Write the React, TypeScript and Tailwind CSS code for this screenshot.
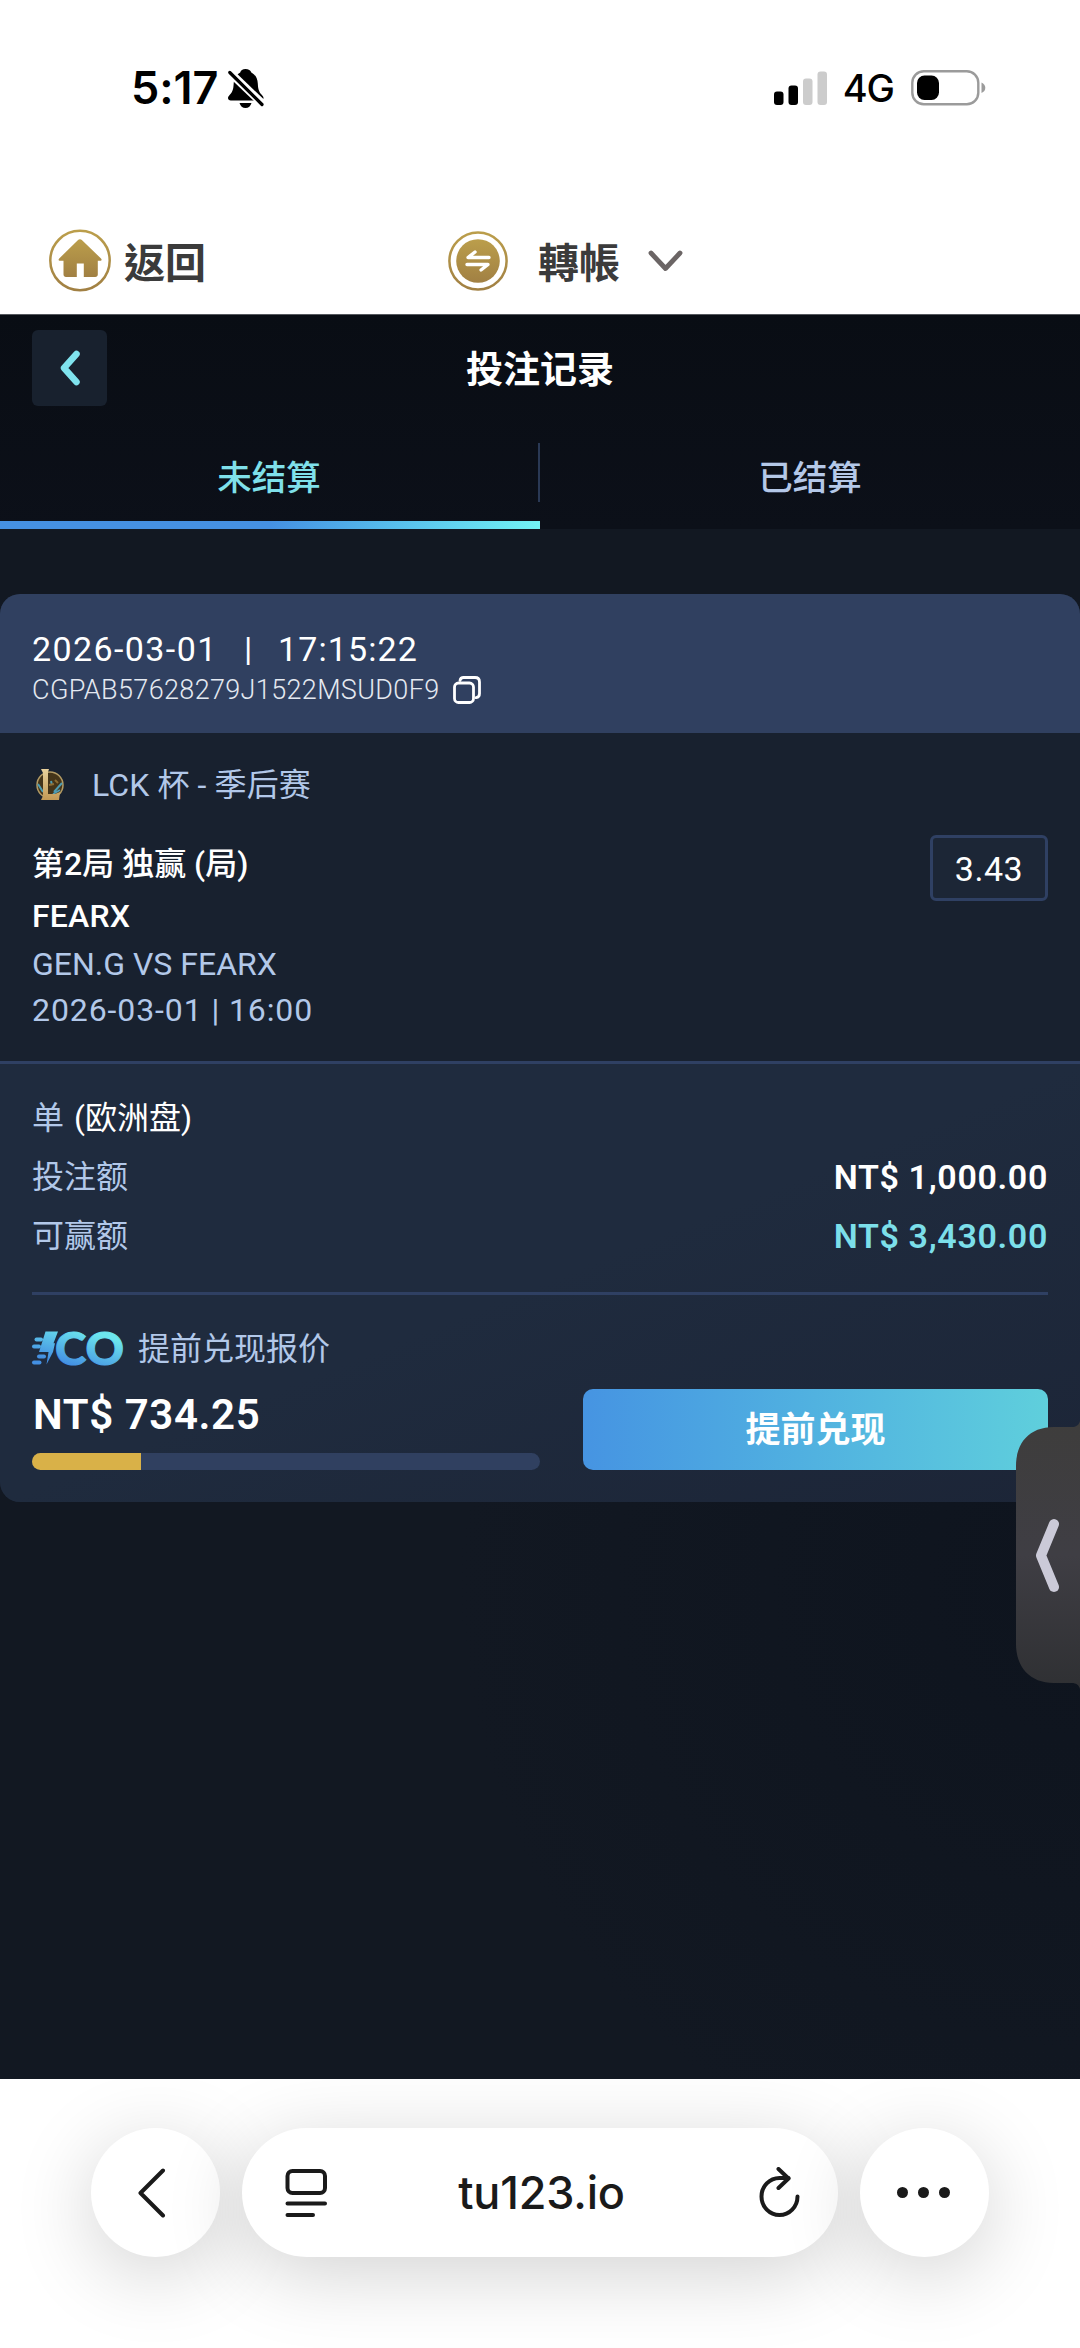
import type { ReactNode } from "react";

const tabs = [
  { label: "未结算", active: true },
  { label: "已结算", active: false },
];

const amounts = [
  { label: "投注额", value: "NT$ 1,000.00", color: "text-white" },
  { label: "可赢额", value: "NT$ 3,430.00", color: "text-[#7cdfea]" },
];

const cashOutProgress = 21.4;

function BellOffIcon() {
  return (
    <svg width="36" height="39" viewBox="0 0 36 39">
      <path
        d="M17.500 0c3 0 5.200 1.400 5.800 3.400C27.500 5.600 29.500 9.500 29.800 14.500c.3 6 1.200 8.500 3.900 11.200 1.200 1.300 1.800 2.100 1.800 3.300 0 1.600-1.100 2.500-2.800 2.500H2.800C1.100 31.500 0 30.600 0 29c0-1.200.6-2 1.800-3.300 2.700-2.700 3.600-5.200 3.900-11.200.3-5 2.300-8.900 6.500-11.100C12.800 1.400 14.500 0 17.500 0Z"
        fill="#000"
      />
      <path d="M11.500 34h12c-.8 3-3 5-6 5s-5.200-2-6-5Z" fill="#000" />
      <path d="M-2 -0.300 38 38" stroke="#fff" strokeWidth="8" />
      <path
        d="M1.800 3.500 34 35.500"
        stroke="#000"
        strokeWidth="3.200"
        strokeLinecap="round"
      />
    </svg>
  );
}

function SignalIcon() {
  return (
    <svg width="53" height="34" viewBox="0 0 53 34">
      <rect x="0" y="20.500" width="9.500" height="13.500" rx="3" fill="#000" />
      <rect x="14.500" y="14.500" width="9.500" height="19.500" rx="3" fill="#000" />
      <rect x="29" y="7.500" width="9.500" height="26.500" rx="3" fill="#ccc" />
      <rect x="43.500" y="0.500" width="9.500" height="33.500" rx="3" fill="#ccc" />
    </svg>
  );
}

function BatteryIcon() {
  return (
    <svg width="75" height="36" viewBox="0 0 75 36">
      <rect
        x="1.300"
        y="1.300"
        width="66"
        height="33"
        rx="11.500"
        fill="none"
        stroke="#9b9b9b"
        strokeWidth="2.400"
      />
      <rect x="6" y="5.500" width="22" height="24.500" rx="7.500" fill="#000" />
      <path d="M70.500 12.500c2.400 1 3.800 3 3.800 5.300s-1.400 4.300-3.800 5.300Z" fill="#9b9b9b" />
    </svg>
  );
}

function Gold({ id }: { id: string }) {
  return (
    <defs>
      <linearGradient id={id} x1="0" y1="0" x2="0" y2="1">
        <stop offset="0" stopColor="#bb9e4b" />
        <stop offset="1" stopColor="#a18043" />
      </linearGradient>
    </defs>
  );
}

function HomeIcon() {
  return (
    <svg width="62" height="63" viewBox="0 0 62 63">
      <Gold id="gold-home" />
      <circle
        cx="31"
        cy="31.500"
        r="29.700"
        fill="none"
        stroke="url(#gold-home)"
        strokeWidth="2.500"
      />
      <path
        d="M28.800 11.200c1.300-1.300 3-1.300 4.300 0L52 29.500c1.200 1.200.6 2.300-1 2.300h-2.200v13.700c0 1.600-1 2.500-2.500 2.500H34.800V34.500h-7V48H17c-1.500 0-2.500-.9-2.500-2.500V31.800h-3.300c-1.600 0-2.200-1.100-1-2.300Z"
        fill="url(#gold-home)"
      />
    </svg>
  );
}

function TransferIcon() {
  return (
    <svg width="60" height="60" viewBox="0 0 60 60">
      <Gold id="gold-transfer" />
      <circle
        cx="30"
        cy="30"
        r="28.600"
        fill="none"
        stroke="url(#gold-transfer)"
        strokeWidth="2.500"
      />
      <circle cx="30" cy="30" r="21.800" fill="url(#gold-transfer)" />
      <g
        fill="none"
        stroke="#fff"
        strokeWidth="3.400"
        strokeLinecap="round"
        strokeLinejoin="round"
      >
        <path d="M41 26.500H20l7-5.500" />
        <path d="M19 33.500h21l-7 5.500" />
      </g>
    </svg>
  );
}

function CopyIcon() {
  return (
    <svg
      width="28"
      height="28"
      viewBox="0 0 28 28"
      fill="none"
      stroke="#fff"
      strokeWidth="2.800"
      strokeLinecap="round"
    >
      <rect x="1.500" y="7" width="19" height="19.500" rx="4" />
      <path d="M7 4.500c.4-2 1.600-3 3.500-3H22c3 0 4.500 1.500 4.500 4.500v11.500c0 2.500-1 3.800-3.300 4.200" />
    </svg>
  );
}

function LeagueIcon() {
  return (
    <svg width="30" height="34" viewBox="0 0 30 34">
      <defs>
        <linearGradient id="league-gold" x1="0" y1="0" x2="0" y2="1">
          <stop offset="0" stopColor="#e9d29c" />
          <stop offset="1" stopColor="#c39a55" />
        </linearGradient>
      </defs>
      <circle cx="15" cy="17" r="13" fill="#453519" stroke="#b39b64" strokeWidth="1.500" />
      <path d="m3 16 5 8M27 15l-8 9M25 22l-7 4M16 13l1 4" stroke="#4e9cb2" strokeWidth="2" />
      <path d="m14 17 5-1M20 12l3 3" stroke="#8b6c33" strokeWidth="2" />
      <path
        d="M6 1h8l-1 3v22h7l5-2-1 8H6l2-4V5Z"
        fill="url(#league-gold)"
      />
    </svg>
  );
}

// lightning bolt with speed lines, followed by the CO wordmark
function CashOutLogo() {
  return (
    <svg
      className="overflow-visible"
      width="92"
      height="36"
      viewBox="0 0 92 36"
    >
      <defs>
        <linearGradient
          id="cash-out"
          x1="50"
          y1="0"
          x2="40"
          y2="36"
          gradientUnits="userSpaceOnUse"
        >
          <stop offset="0" stopColor="#6ce6ee" />
          <stop offset="1" stopColor="#438fe2" />
        </linearGradient>
      </defs>
      <g fill="url(#cash-out)">
        <path d="M13.500 1.500H26l-4.500 11.800h1.500L21 22l-6.500 12.500L16.500 22H7Z" />
        <rect x="2.500" y="7.500" width="8.500" height="4" rx="2" />
        <rect x="0" y="14.500" width="9" height="4" rx="2" />
        <rect x="5" y="24.500" width="9" height="4" rx="2" />
        <rect x="0" y="30.500" width="9.500" height="4" rx="2" />
        <text
          x="23"
          y="34.500"
          fontFamily="Lato, sans-serif"
          fontWeight="900"
          fontSize="46"
          stroke="url(#cash-out)"
          strokeWidth="1"
          textLength="69"
          lengthAdjust="spacingAndGlyphs"
        >
          CO
        </text>
      </g>
    </svg>
  );
}

function StatusBar() {
  return (
    <div className="flex h-[176px] items-start justify-between pt-[68px] pr-[94px] pl-[131px]">
      <div className="flex h-10 items-center gap-2.5">
        <span className="font-[Inter,sans-serif] text-[45px] leading-10 font-semibold tracking-[-0.1px] text-black">
          5:17
        </span>
        <BellOffIcon />
      </div>
      <div className="flex h-10 items-center">
        <SignalIcon />
        <span className="ml-4 font-[Inter,sans-serif] text-[38px] leading-[42px] font-medium tracking-[-1px] text-black">
          4G
        </span>
        <span className="ml-[17px]">
          <BatteryIcon />
        </span>
      </div>
    </div>
  );
}

function SiteHeader() {
  return (
    <div className="flex h-[139px] items-start border-b border-[#55585e] pl-[49px] font-['Noto_Sans_CJK_TC',sans-serif] text-[41px] leading-[60px] font-bold text-[#3b3b3b]">
      <div className="mt-[53px] flex w-[399px] items-center gap-[13px]">
        <HomeIcon />
        <span className="-mt-0.5">返回</span>
      </div>
      <div className="mt-[55px] flex items-center">
        <TransferIcon />
        <span className="-mt-0.5 ml-[30px]">轉帳</span>
        <svg className="ml-[28px]" width="35" height="22" viewBox="0 0 35 22" fill="none">
          <path
            d="m3 3 14.500 15.500L32 3"
            stroke="#6b6565"
            strokeWidth="4.800"
            strokeLinecap="round"
            strokeLinejoin="round"
          />
        </svg>
      </div>
    </div>
  );
}

function TitleBar() {
  return (
    <div className="grid h-[108px] grid-cols-[75px_1fr_75px] items-start px-8 pt-[15px]">
      <button className="flex h-[76px] items-center justify-center rounded-md bg-[#18212e]">
        <svg width="24" height="38" viewBox="0 0 24 38" fill="none">
          <path
            d="M18.500 5 6 19l12.500 14"
            stroke="#7fe3ee"
            strokeWidth="6.500"
            strokeLinecap="round"
            strokeLinejoin="round"
          />
        </svg>
      </button>
      <h1 className="text-center text-[37px] leading-[82px] font-bold text-white">
        投注记录
      </h1>
    </div>
  );
}

function Tabs() {
  return (
    <div className="grid h-[106px] grid-cols-2">
      {tabs.map((tab) => (
        <div key={tab.label} className="flex flex-col justify-between">
          <div
            className={
              tab.active
                ? "mt-5 h-[59px] border-r-2 border-[#2a3955] text-center text-[34.5px] leading-[70px] font-medium text-[#7fe0ea]"
                : "mt-5 h-[59px] text-center text-[34.5px] leading-[70px] font-medium text-[#b4c8e8]"
            }
          >
            {tab.label}
          </div>
          {tab.active && (
            <div className="h-2 bg-linear-to-r from-[#4590e2] from-50% to-[#72f3f4]" />
          )}
        </div>
      ))}
    </div>
  );
}

function BetCard() {
  return (
    <div className="mt-[65px] overflow-hidden rounded-[20px] bg-[#18212f] text-[#b2c8e9]">
      <div className="h-[139px] bg-[#304060] pt-[35px] pl-8 text-white">
        <div className="flex h-10 items-center text-[34px] leading-10">
          <span className="w-[212px] tracking-[1.4px]">2026-03-01</span>
          <span className="w-[34px]">|</span>
          <span className="tracking-[1.1px]">17:15:22</span>
        </div>
        <div className="mt-px flex h-10 items-center">
          <span className="w-[421px] text-[27px] leading-10 font-light tracking-[0.35px] whitespace-nowrap text-[#e4e9f1]">
            CGPAB57628279J1522MSUD0F9
          </span>
          <CopyIcon />
        </div>
      </div>

      <div className="h-[328px] px-8 pt-8">
        <div className="flex h-10 items-center gap-[27px] pl-[3px]">
          <LeagueIcon />
          <span className="text-[32px] leading-10 tracking-[0.1px] whitespace-nowrap">
            LCK 杯 - 季后赛
          </span>
        </div>
        <div className="mt-[30px] flex items-start justify-between">
          <div className="pt-1.5 text-[32px] leading-[46px]">
            <p className="font-medium text-white">第2局 独赢 (局)</p>
            <p className="mt-1.5 font-medium tracking-[0.2px] text-white">FEARX</p>
            <p className="mt-0.5">GEN.G VS FEARX</p>
            <p className="tracking-[0.9px]">2026-03-01 | 16:00</p>
          </div>
          <div className="flex h-[66px] w-[118px] items-center justify-center rounded-md border-3 border-[#2f4063] bg-[#1c2636] pt-0.5 text-[34px] tracking-[0.5px] text-white">
            3.43
          </div>
        </div>
      </div>

      <div className="border-t-3 border-[#2f4063] bg-linear-to-br from-[#1f2b3e] from-50% to-[#1c2537] px-8 pt-6 pb-8">
        <Row>
          <span>
            单 <span className="ml-0.5 text-white">(欧洲盘)</span>
          </span>
        </Row>
        {amounts.map((row) => (
          <Row key={row.label}>
            <span>{row.label}</span>
            <span
              className={`pt-0.5 text-[34px] font-semibold tracking-[0.65px] ${row.color}`}
            >
              {row.value}
            </span>
          </Row>
        ))}
        <div className="mt-[27px] h-[3px] bg-[#2f4063]" />
        <div className="mt-[33px] flex items-end justify-between">
          <div className="w-[508px]">
            <div className="flex h-10 items-center gap-3.5">
              <CashOutLogo />
              <span className="pt-0.5 text-[32px] leading-10 whitespace-nowrap">
                提前兑现报价
              </span>
            </div>
            <div className="mt-6 h-[46px] pl-px text-[42px] leading-[46px] font-semibold tracking-[0.6px] text-white">
              NT$ 734.25
            </div>
            <div className="mt-[15px] h-[17px] overflow-hidden rounded-full bg-[#304060]">
              <div
                className="h-full bg-[#d9b148]"
                style={{ width: `${cashOutProgress}%` }}
              />
            </div>
          </div>
          <button className="h-[81px] w-[465px] rounded-[10px] bg-linear-to-r from-[#4694e2] to-[#5fcfdc] text-[35px] leading-[83px] font-bold text-white">
            提前兑现
          </button>
        </div>
      </div>
    </div>
  );
}

function Row({ children }: { children: ReactNode }) {
  return (
    <div className="flex h-[59px] items-center justify-between text-[32px]">
      {children}
    </div>
  );
}

function DrawerHandle() {
  return (
    <svg
      className="absolute top-[1421px] right-0"
      width="64"
      height="270"
      viewBox="0 0 64 270"
    >
      <defs>
        <linearGradient id="handle" x1="0" y1="0" x2="0" y2="1">
          <stop offset="0" stopColor="#3e3d3c" />
          <stop offset="0.500" stopColor="#3f3e44" />
          <stop offset="1" stopColor="#2f3033" />
        </linearGradient>
      </defs>
      <path
        d="M64 0c-1 4-4 6-8 6H38C13 6 0 22 0 45v178c0 23 14 39 38 39h18c4 0 7 2 8 6Z"
        fill="url(#handle)"
      />
      <path
        d="m38 103-13 31.500 13 31.500"
        fill="none"
        stroke="#cbcad8"
        strokeWidth="10"
        strokeLinecap="round"
        strokeLinejoin="round"
      />
    </svg>
  );
}

function BrowserBar() {
  return (
    <div className="flex h-[269px] items-start gap-[22px] overflow-hidden bg-white pt-[49px] pl-[91px] text-[#1a1a1a]">
      <button className="flex size-[129px] items-center justify-center rounded-full bg-white pr-[7px] shadow-[0_16px_80px_rgba(0,0,0,0.18)]">
        <svg width="28" height="50" viewBox="0 0 28 50" fill="none">
          <path
            d="M25 2.500 2.500 25 25 47.500"
            stroke="currentColor"
            strokeWidth="4"
            strokeLinecap="round"
            strokeLinejoin="round"
          />
        </svg>
      </button>
      <div className="flex h-[129px] w-[596px] items-center justify-between rounded-full bg-white pr-[37px] pl-[43px] shadow-[0_16px_80px_rgba(0,0,0,0.18)]">
        <svg
          width="43"
          height="50"
          viewBox="0 0 43 50"
          fill="none"
          stroke="currentColor"
          strokeWidth="4"
          strokeLinecap="round"
        >
          <rect x="2.500" y="3" width="37.500" height="22" rx="5" />
          <path d="M2.500 35.500H40M2.500 47H28" />
        </svg>
        <span className="mr-1 font-[Inter,sans-serif] text-[45px] leading-[60px] font-medium tracking-[-0.2px]">
          tu123.io
        </span>
        <svg
          width="42"
          height="52"
          viewBox="0 0 42 52"
          fill="none"
          stroke="currentColor"
          strokeWidth="4"
          strokeLinecap="round"
          strokeLinejoin="round"
        >
          <path d="M38.500 29.500A18 18.500 0 1 1 20.500 11h9" />
          <path d="m19.500 2 10 9.500-10 9.500" />
        </svg>
      </div>
      <button className="flex size-[129px] items-center justify-center gap-2.5 rounded-full bg-white pr-[3px] shadow-[0_16px_80px_rgba(0,0,0,0.18)]">
        <span className="size-[11px] rounded-full bg-[#1a1a1a]" />
        <span className="size-[11px] rounded-full bg-[#1a1a1a]" />
        <span className="size-[11px] rounded-full bg-[#1a1a1a]" />
      </button>
    </div>
  );
}

export default function App() {
  return (
    <div className="relative flex h-[2348px] w-[1080px] flex-col overflow-hidden bg-white font-[Roboto,'Noto_Sans_CJK_SC',sans-serif]">
      <StatusBar />
      <SiteHeader />
      <main className="flex-1 bg-[radial-gradient(circle_at_100%_72%,#0e141e,#121822_620px)]">
        <div className="bg-linear-to-b from-[#090d14] to-[#0c1019]">
          <TitleBar />
          <Tabs />
        </div>
        <BetCard />
      </main>
      <BrowserBar />
      <DrawerHandle />
    </div>
  );
}
